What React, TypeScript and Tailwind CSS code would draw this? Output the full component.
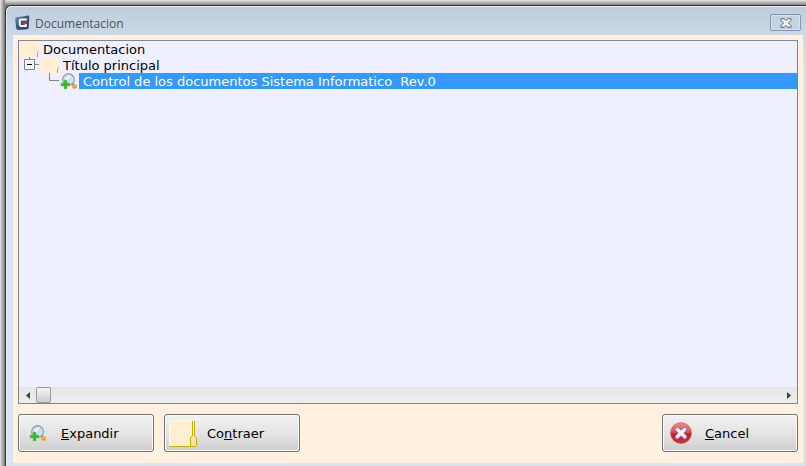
import { useState } from "react";
import type { ReactNode } from "react";

function AppIcon() {
  return (
    <svg aria-hidden="true" width="16" height="16" viewBox="0 0 16 16">
      <defs>
        <linearGradient id="app-bg" x1="0" y1="0" x2="1" y2="1">
          <stop offset="0" stopColor="#8496b8" />
          <stop offset="0.4" stopColor="#40578a" />
          <stop offset="1" stopColor="#263a68" />
        </linearGradient>
      </defs>
      <path d="M2 2 Q8 2 12.500 .6 Q14.300.4 14.300 2 L13.700 12.500 Q13.500 14.100 12 14.200 L3.500 15 Q1.500 15 1.200 13 L.1 4 Q.1 2.200 2 2Z" fill="url(#app-bg)" />
      <path d="M11.800 4.600 H6 Q4.700 4.600 4.700 6 V9.600 Q4.700 11 6 11 H10.800 V8.500" fill="none" stroke="#fff" strokeWidth="2" />
      <path d="M8 6.800h4v2.200H8z" fill="#e02828" />
    </svg>
  );
}

function SearchAddIcon() {
  return (
    <svg aria-hidden="true" className="shrink-0" width="18" height="16" viewBox="0 0 18 16">
      <path d="M13 10.500 L15 12.500" stroke="#85898c" strokeWidth="2.600" />
      <circle cx="9.500" cy="6.700" r="5.700" fill="#c2e3f6" stroke="#a4a9ac" strokeWidth="1.800" />
      <circle cx="9.500" cy="6.700" r="4.400" fill="none" stroke="#e4ebef" />
      <path d="M6.500 6.500 Q7.500 3 11.500 3 Q9 5 8.500 8z" fill="#f3fbff" />
      <circle cx="15.600" cy="13.500" r="2.300" fill="#f28e12" />
      <circle cx="15.200" cy="12.800" r="1.100" fill="#ffd27a" />
      <path d="M5 7h3v3h3v3H8v3H5v-3H2v-3h3z" fill="#35b82c" stroke="#83cf7b" strokeWidth="0.500" />
    </svg>
  );
}

function FolderIcon() {
  return (
    <svg aria-hidden="true" className="shrink-0" width="20" height="16" viewBox="0 0 20 16">
      <path d="M0 0h20v10h-1l-1 1.500V16H0z" fill="#ffeed2" />
      <path d="M19 10h1v1h-1v5h-1v-4.500h1z" fill="#c2b400" />
    </svg>
  );
}

function OpenFolderIcon() {
  return (
    <svg aria-hidden="true" className="shrink-0" width="30" height="30" viewBox="0 0 30 30">
      <path d="M1 2h25v26H1z" fill="#ffeed2" />
      <path d="M1.500 28V2.500H24" fill="none" stroke="#fffbdc" />
      <path d="M24.500 18l-1.500 1.500V28h4.500l.5-1V19.500L26.500 18z" fill="#ffe0b0" />
      <path d="M24.500 3v15l-2 1.500V28M26.500 3v15l2 1.500V27l-1 1.500H1" fill="none" stroke="#c2b400" />
    </svg>
  );
}

function CancelIcon() {
  return (
    <svg aria-hidden="true" className="shrink-0" width="22" height="22" viewBox="0 0 22 22">
      <defs>
        <linearGradient id="cancel-bg" x1="0" y1="0" x2="0" y2="1">
          <stop offset="0" stopColor="#f58a92" />
          <stop offset="0.48" stopColor="#dc4a54" />
          <stop offset="0.54" stopColor="#c41c28" />
          <stop offset="1" stopColor="#cc3440" />
        </linearGradient>
      </defs>
      <circle cx="11" cy="11" r="10.500" fill="url(#cancel-bg)" stroke="#c85a62" strokeWidth="0.600" />
      <path d="M7.200 7.200l7.600 7.600M14.800 7.200l-7.600 7.600" stroke="#a85070" strokeWidth="4.800" strokeLinecap="round" />
      <path d="M7.200 7.200l7.600 7.600M14.800 7.200l-7.600 7.600" stroke="#eef4ff" strokeWidth="3.400" strokeLinecap="round" />
    </svg>
  );
}

function CloseIcon() {
  return (
    <svg aria-hidden="true" width="12" height="10" viewBox="0 0 12 10">
      <path
        d="M1 .7h3.200L6 2.700 7.800.7H11v1.800L8.500 5 11 7.500v1.800H7.800L6 7.300 4.200 9.300H1V7.500L3.500 5 1 2.500z"
        fill="#fafafa"
        stroke="#5a6272"
      />
    </svg>
  );
}

type DialogButtonProps = {
  icon: ReactNode;
  children: ReactNode;
  onClick?: () => void;
};

function DialogButton({ icon, children, onClick }: DialogButtonProps) {
  return (
    <button
      type="button"
      onClick={onClick}
      className="flex h-[38px] w-[136px] items-center rounded-[3px] border border-[#707070] bg-linear-to-b from-[#f2f2f2] from-0% via-[#e4e4e4] via-50% to-[#cfcfcf] to-100% px-[3px] shadow-[inset_0_0_0_1px_#fafafa]"
    >
      <span className="flex w-[30px] shrink-0 justify-center">{icon}</span>
      <span className="ml-2 pt-[2px] pl-px">{children}</span>
    </button>
  );
}

export default function App() {
  const [expanded, setExpanded] = useState(true);

  return (
    <div className="flex min-h-screen bg-linear-to-r from-[#e6e6e6] to-[#777777] to-[5px] pl-[5px] font-['DejaVu_Sans',Verdana,sans-serif] text-[13px] leading-4 text-black">
      <div className="flex min-w-0 flex-1 flex-col">
        <div className="h-[5px] bg-linear-to-b from-[#e8e8e8] to-[#858585]" />
        <section
          aria-labelledby="window-title"
          className="flex flex-1 flex-col rounded-tl-md border-t border-l border-[#36383c] bg-linear-to-b from-[#bfcddb] to-[#d7e4f2] to-[60px] pr-[3px] pb-[3px] pl-[7px] shadow-[inset_1px_1px_0_#e3edf6]"
        >
          <header className="flex h-[29px] items-center pt-1 pl-[2px]">
            <AppIcon />
            <h1
              id="window-title"
              className="ml-1 flex-1 pt-[2px] font-['Open_Sans','Segoe_UI',sans-serif] text-[12px] text-[#4d545c]"
            >
              Documentacion
            </h1>
            <button
              type="button"
              aria-label="Cerrar"
              className="mr-[2px] flex h-[17px] w-[31px] items-center justify-center rounded-[2px] border border-[#8594ae] bg-[#c5d2e0] shadow-[inset_0_0_0_1px_#d5e0ea]"
            >
              <CloseIcon />
            </button>
          </header>

          <main className="flex flex-1 flex-col gap-[10px] bg-[#fff0e0] px-[5px] pt-[5px] pb-[11px]">
            <div className="flex flex-1 flex-col border border-[#82858f] bg-[#eef0ff]">
              <ul role="tree" aria-label="Documentacion" className="flex-1 leading-[18px]">
                <li role="treeitem" aria-expanded="true">
                  <div className="flex h-4 items-start">
                    <FolderIcon />
                    <span className="ml-1">Documentacion</span>
                  </div>
                  <ul role="group">
                    <li role="treeitem" aria-expanded={expanded}>
                      <div className="flex h-4 items-start">
                        <button
                          type="button"
                          aria-label={expanded ? "Contraer" : "Expandir"}
                          onClick={() => setExpanded(!expanded)}
                        >
                          <svg className="block" width="20" height="16" viewBox="0 0 20 16">
                            <path d="M10.500 0v3M15 7.500h5" stroke="#808080" />
                            <path d="M5.500 2.500h10v10h-10z" fill="#f4f4fb" stroke="#808080" />
                            <path d="M8 7.500h5" stroke="#000" />
                            {!expanded && <path d="M10.500 5v5" stroke="#000" />}
                          </svg>
                        </button>
                        <FolderIcon />
                        <span className="ml-1">Título principal</span>
                      </div>
                      {expanded && (
                        <ul role="group">
                          <li role="treeitem" aria-selected="true" className="flex h-4 items-start pl-5">
                            <svg aria-hidden="true" className="shrink-0" width="20" height="16" viewBox="0 0 20 16">
                              <path d="M10.500 0v7.500H20" fill="none" stroke="#808080" />
                            </svg>
                            <SearchAddIcon />
                            <span className="ml-[2px] h-4 flex-1 bg-[#3399ff] pl-1 whitespace-pre text-white">
                              Control de los documentos Sistema Informatico{"  "}Rev.0
                            </span>
                          </li>
                        </ul>
                      )}
                    </li>
                  </ul>
                </li>
              </ul>

              <div className="flex h-4 bg-linear-to-b from-[#e6e6e6] to-[#eeeeee]">
                <button type="button" aria-label="Desplazar a la izquierda" className="flex w-[17px] items-center justify-center">
                  <svg width="4" height="7" viewBox="0 0 4 7">
                    <path d="M4 0v7L0 3.500z" fill="#404040" />
                  </svg>
                </button>
                <div className="flex-1">
                  <div className="h-4 w-[15px] rounded-[2px] border border-[#999999] bg-linear-to-b from-[#f4f4f4] to-[#cecece]" />
                </div>
                <button type="button" aria-label="Desplazar a la derecha" className="flex w-[17px] items-center justify-center">
                  <svg width="4" height="7" viewBox="0 0 4 7">
                    <path d="M0 0v7l4-3.500z" fill="#404040" />
                  </svg>
                </button>
              </div>
            </div>

            <div className="flex gap-[10px]">
              <DialogButton icon={<SearchAddIcon />} onClick={() => setExpanded(true)}>
                <u>E</u>xpandir
              </DialogButton>
              <DialogButton icon={<OpenFolderIcon />} onClick={() => setExpanded(false)}>
                Co<u>n</u>traer
              </DialogButton>
              <div className="ml-auto">
                <DialogButton icon={<CancelIcon />}>
                  <u>C</u>ancel
                </DialogButton>
              </div>
            </div>
          </main>
        </section>
      </div>
    </div>
  );
}
